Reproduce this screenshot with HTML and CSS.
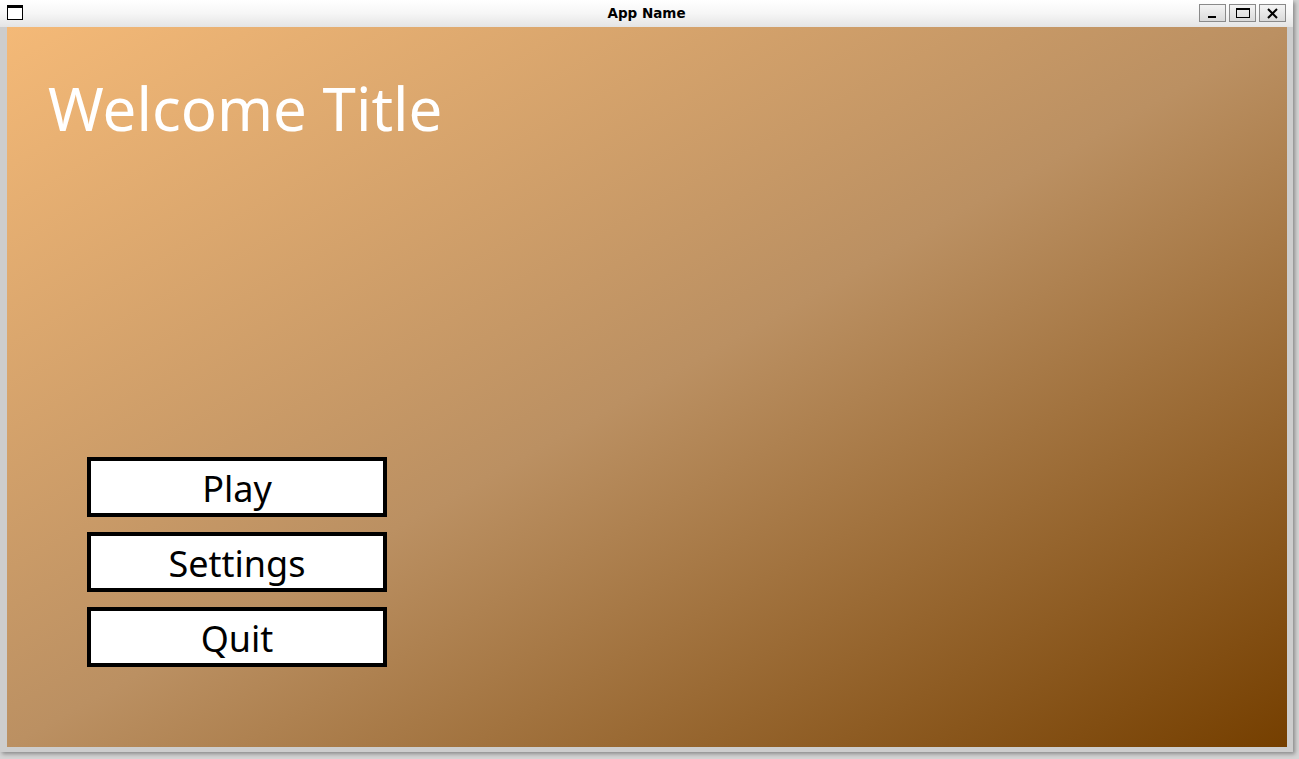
FILE: index.html
```html
<!DOCTYPE html>
<html>
<head>
<meta charset="utf-8">
<title>App Name</title>
<link rel="stylesheet" href="styles.css">
</head>
<body>
<div class="desktop">
  <div class="window">
    <div class="titlebar">
      <div class="app-icon"></div>
      <div class="title">App Name</div>
      <div class="controls">
        <div class="ctl">
          <svg width="27" height="18" viewBox="0 0 27 18"><rect x="9" y="12" width="8" height="2" fill="#000"/></svg>
        </div>
        <div class="ctl">
          <svg width="27" height="18" viewBox="0 0 27 18"><rect x="7.5" y="4.5" width="13" height="9" fill="none" stroke="#000" stroke-width="1"/><rect x="7" y="4" width="14" height="2" fill="#000"/></svg>
        </div>
        <div class="ctl">
          <svg width="27" height="18" viewBox="0 0 27 18"><path d="M9 5 L18 14 M18 5 L9 14" stroke="#000" stroke-width="2" fill="none"/></svg>
        </div>
      </div>
    </div>
    <div class="content">
      <h1 class="welcome">Welcome Title</h1>
      <div class="menu">
        <div class="menu-btn">Play</div>
        <div class="menu-btn">Settings</div>
        <div class="menu-btn">Quit</div>
      </div>
    </div>
  </div>
</div>
</body>
</html>
```

FILE: styles.css
```css
html, body {
  margin: 0;
  padding: 0;
}
body {
  width: 1299px;
  height: 759px;
  overflow: hidden;
  background: #d4d4d4;
  font-family: "Noto Sans", "DejaVu Sans", sans-serif;
}
.desktop {
  width: 1299px;
  height: 759px;
  display: flex;
}
.window {
  width: 1293px;
  height: 752px;
  background: #cdcdcd;
  display: flex;
  flex-direction: column;
  box-shadow: 2px 2px 4px rgba(0,0,0,0.35);
}
.titlebar {
  height: 27px;
  flex: none;
  display: flex;
  align-items: center;
  position: relative;
  background: linear-gradient(to bottom, #ffffff 0%, #f6f6f6 50%, #e4e4e4 100%);
}
.app-icon {
  width: 14px;
  height: 11px;
  margin-left: 7px;
  margin-bottom: 2px;
  border: 1px solid #000;
  border-top: 3px solid #000;
  background: #fff;
}
.title {
  position: absolute;
  left: 0;
  right: 0;
  top: 5px;
  text-align: center;
  font-family: "DejaVu Sans", sans-serif;
  font-weight: bold;
  font-size: 13.5px;
  color: #000;
  pointer-events: none;
}
.controls {
  margin-left: auto;
  margin-right: 7px;
  margin-bottom: 2px;
  display: flex;
  gap: 3px;
}
.ctl {
  width: 25px;
  height: 16px;
  border: 1px solid #8a8a8a;
  background: linear-gradient(to bottom, #f4f4f4, #dadada);
  display: flex;
  align-items: center;
  justify-content: center;
  overflow: hidden;
}
.ctl svg {
  flex: none;
}
.content {
  margin: 0 6px 5px 7px;
  flex: 1;
  display: flex;
  flex-direction: column;
  background: linear-gradient(to bottom right, #f4b977 0%, #bb9062 50%, #753f00 100%);
  padding: 40px 0 80px 41px;
}
.welcome {
  margin: 0;
  font-weight: normal;
  font-size: 60px;
  color: #ffffff;
  line-height: normal;
}
.menu {
  margin-top: auto;
  margin-left: 39px;
  display: flex;
  flex-direction: column;
  gap: 15px;
}
.menu-btn {
  width: 292px;
  height: 48px;
  border: 4px solid #000;
  background: #fff;
  color: #000;
  font-size: 36px;
  display: flex;
  align-items: center;
  justify-content: center;
  line-height: 1;
  padding-top: 4px;
  box-sizing: content-box;
}
```
